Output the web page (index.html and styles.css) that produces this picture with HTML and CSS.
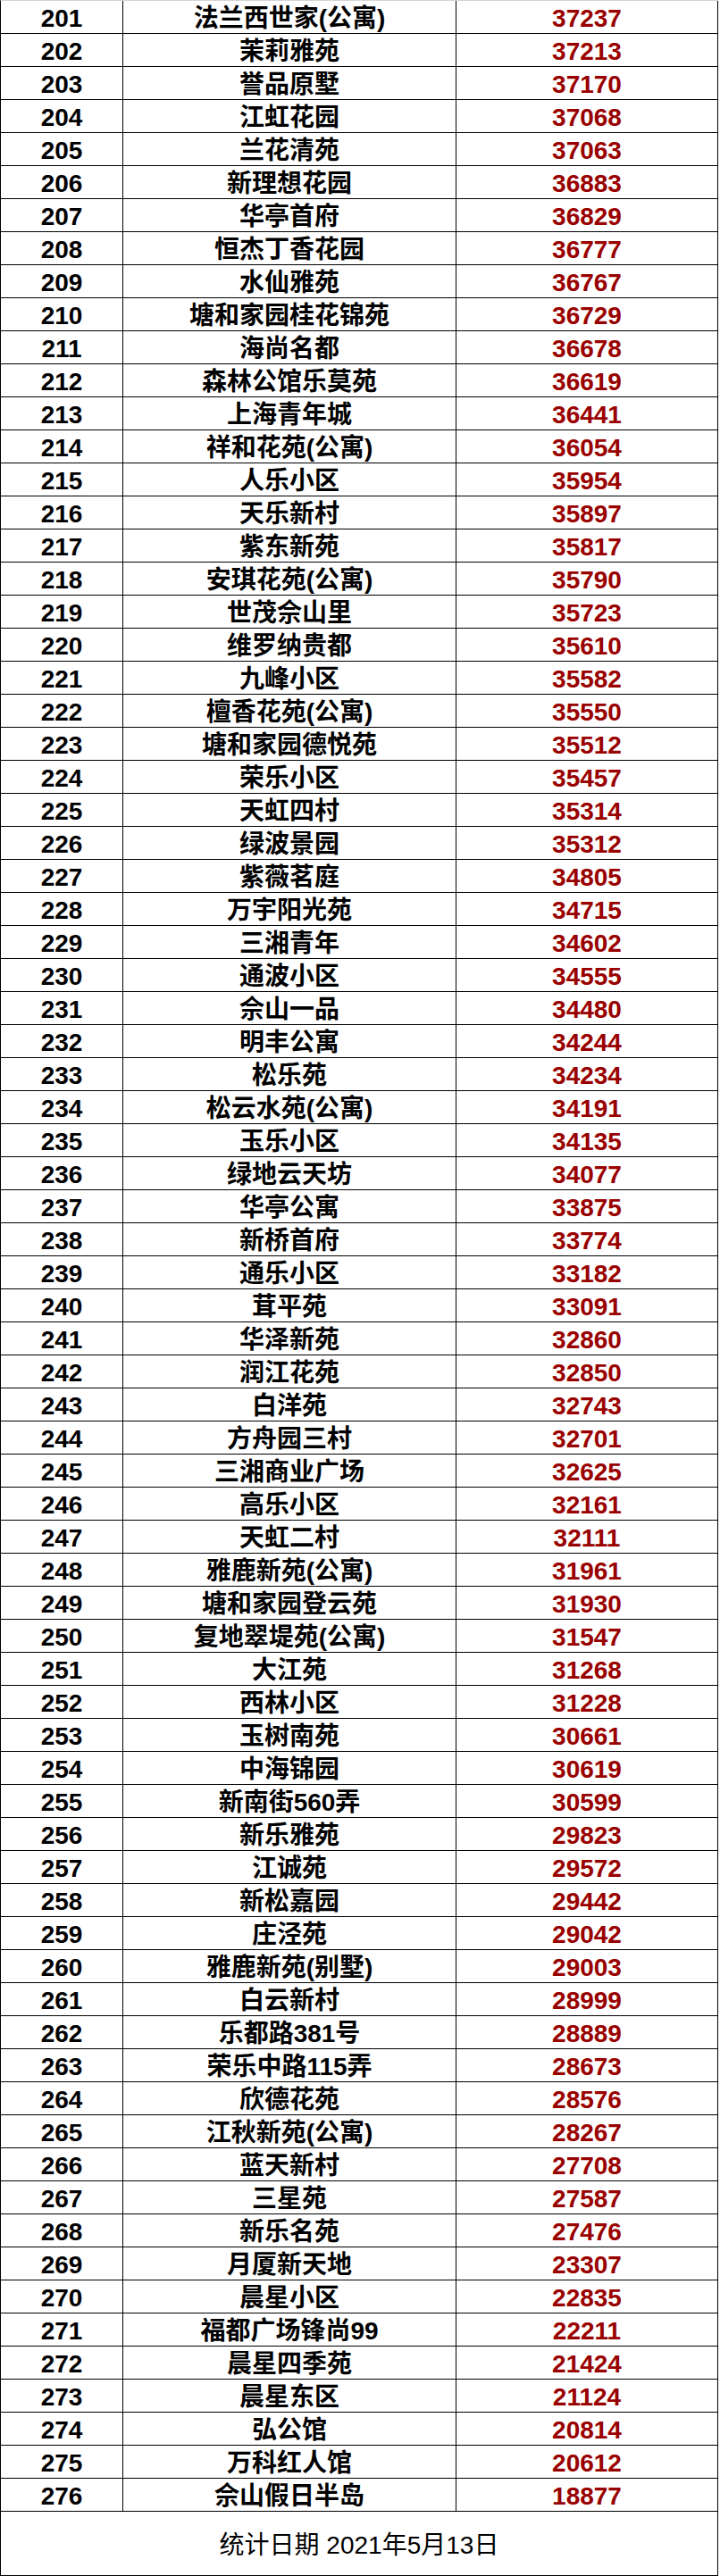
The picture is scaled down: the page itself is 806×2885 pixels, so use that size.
FILE: index.html
```html
<!DOCTYPE html>
<html lang="zh-CN">
<head>
<meta charset="utf-8">
<title>统计</title>
<link rel="stylesheet" href="styles.css">
</head>
<body>
<div class="sheet">
<div class="row"><div class="c no">201</div><div class="c nm">法兰西世家(公寓)</div><div class="c val">37237</div></div>
<div class="row"><div class="c no">202</div><div class="c nm">茉莉雅苑</div><div class="c val">37213</div></div>
<div class="row"><div class="c no">203</div><div class="c nm">誉品原墅</div><div class="c val">37170</div></div>
<div class="row"><div class="c no">204</div><div class="c nm">江虹花园</div><div class="c val">37068</div></div>
<div class="row"><div class="c no">205</div><div class="c nm">兰花清苑</div><div class="c val">37063</div></div>
<div class="row"><div class="c no">206</div><div class="c nm">新理想花园</div><div class="c val">36883</div></div>
<div class="row"><div class="c no">207</div><div class="c nm">华亭首府</div><div class="c val">36829</div></div>
<div class="row"><div class="c no">208</div><div class="c nm">恒杰丁香花园</div><div class="c val">36777</div></div>
<div class="row"><div class="c no">209</div><div class="c nm">水仙雅苑</div><div class="c val">36767</div></div>
<div class="row"><div class="c no">210</div><div class="c nm">塘和家园桂花锦苑</div><div class="c val">36729</div></div>
<div class="row"><div class="c no">211</div><div class="c nm">海尚名都</div><div class="c val">36678</div></div>
<div class="row"><div class="c no">212</div><div class="c nm">森林公馆乐莫苑</div><div class="c val">36619</div></div>
<div class="row"><div class="c no">213</div><div class="c nm">上海青年城</div><div class="c val">36441</div></div>
<div class="row"><div class="c no">214</div><div class="c nm">祥和花苑(公寓)</div><div class="c val">36054</div></div>
<div class="row"><div class="c no">215</div><div class="c nm">人乐小区</div><div class="c val">35954</div></div>
<div class="row"><div class="c no">216</div><div class="c nm">天乐新村</div><div class="c val">35897</div></div>
<div class="row"><div class="c no">217</div><div class="c nm">紫东新苑</div><div class="c val">35817</div></div>
<div class="row"><div class="c no">218</div><div class="c nm">安琪花苑(公寓)</div><div class="c val">35790</div></div>
<div class="row"><div class="c no">219</div><div class="c nm">世茂佘山里</div><div class="c val">35723</div></div>
<div class="row"><div class="c no">220</div><div class="c nm">维罗纳贵都</div><div class="c val">35610</div></div>
<div class="row"><div class="c no">221</div><div class="c nm">九峰小区</div><div class="c val">35582</div></div>
<div class="row"><div class="c no">222</div><div class="c nm">檀香花苑(公寓)</div><div class="c val">35550</div></div>
<div class="row"><div class="c no">223</div><div class="c nm">塘和家园德悦苑</div><div class="c val">35512</div></div>
<div class="row"><div class="c no">224</div><div class="c nm">荣乐小区</div><div class="c val">35457</div></div>
<div class="row"><div class="c no">225</div><div class="c nm">天虹四村</div><div class="c val">35314</div></div>
<div class="row"><div class="c no">226</div><div class="c nm">绿波景园</div><div class="c val">35312</div></div>
<div class="row"><div class="c no">227</div><div class="c nm">紫薇茗庭</div><div class="c val">34805</div></div>
<div class="row"><div class="c no">228</div><div class="c nm">万宇阳光苑</div><div class="c val">34715</div></div>
<div class="row"><div class="c no">229</div><div class="c nm">三湘青年</div><div class="c val">34602</div></div>
<div class="row"><div class="c no">230</div><div class="c nm">通波小区</div><div class="c val">34555</div></div>
<div class="row"><div class="c no">231</div><div class="c nm">佘山一品</div><div class="c val">34480</div></div>
<div class="row"><div class="c no">232</div><div class="c nm">明丰公寓</div><div class="c val">34244</div></div>
<div class="row"><div class="c no">233</div><div class="c nm">松乐苑</div><div class="c val">34234</div></div>
<div class="row"><div class="c no">234</div><div class="c nm">松云水苑(公寓)</div><div class="c val">34191</div></div>
<div class="row"><div class="c no">235</div><div class="c nm">玉乐小区</div><div class="c val">34135</div></div>
<div class="row"><div class="c no">236</div><div class="c nm">绿地云天坊</div><div class="c val">34077</div></div>
<div class="row"><div class="c no">237</div><div class="c nm">华亭公寓</div><div class="c val">33875</div></div>
<div class="row"><div class="c no">238</div><div class="c nm">新桥首府</div><div class="c val">33774</div></div>
<div class="row"><div class="c no">239</div><div class="c nm">通乐小区</div><div class="c val">33182</div></div>
<div class="row"><div class="c no">240</div><div class="c nm">茸平苑</div><div class="c val">33091</div></div>
<div class="row"><div class="c no">241</div><div class="c nm">华泽新苑</div><div class="c val">32860</div></div>
<div class="row"><div class="c no">242</div><div class="c nm">润江花苑</div><div class="c val">32850</div></div>
<div class="row"><div class="c no">243</div><div class="c nm">白洋苑</div><div class="c val">32743</div></div>
<div class="row"><div class="c no">244</div><div class="c nm">方舟园三村</div><div class="c val">32701</div></div>
<div class="row"><div class="c no">245</div><div class="c nm">三湘商业广场</div><div class="c val">32625</div></div>
<div class="row"><div class="c no">246</div><div class="c nm">高乐小区</div><div class="c val">32161</div></div>
<div class="row"><div class="c no">247</div><div class="c nm">天虹二村</div><div class="c val">32111</div></div>
<div class="row"><div class="c no">248</div><div class="c nm">雅鹿新苑(公寓)</div><div class="c val">31961</div></div>
<div class="row"><div class="c no">249</div><div class="c nm">塘和家园登云苑</div><div class="c val">31930</div></div>
<div class="row"><div class="c no">250</div><div class="c nm">复地翠堤苑(公寓)</div><div class="c val">31547</div></div>
<div class="row"><div class="c no">251</div><div class="c nm">大江苑</div><div class="c val">31268</div></div>
<div class="row"><div class="c no">252</div><div class="c nm">西林小区</div><div class="c val">31228</div></div>
<div class="row"><div class="c no">253</div><div class="c nm">玉树南苑</div><div class="c val">30661</div></div>
<div class="row"><div class="c no">254</div><div class="c nm">中海锦园</div><div class="c val">30619</div></div>
<div class="row"><div class="c no">255</div><div class="c nm">新南街560弄</div><div class="c val">30599</div></div>
<div class="row"><div class="c no">256</div><div class="c nm">新乐雅苑</div><div class="c val">29823</div></div>
<div class="row"><div class="c no">257</div><div class="c nm">江诚苑</div><div class="c val">29572</div></div>
<div class="row"><div class="c no">258</div><div class="c nm">新松嘉园</div><div class="c val">29442</div></div>
<div class="row"><div class="c no">259</div><div class="c nm">庄泾苑</div><div class="c val">29042</div></div>
<div class="row"><div class="c no">260</div><div class="c nm">雅鹿新苑(别墅)</div><div class="c val">29003</div></div>
<div class="row"><div class="c no">261</div><div class="c nm">白云新村</div><div class="c val">28999</div></div>
<div class="row"><div class="c no">262</div><div class="c nm">乐都路381号</div><div class="c val">28889</div></div>
<div class="row"><div class="c no">263</div><div class="c nm">荣乐中路115弄</div><div class="c val">28673</div></div>
<div class="row"><div class="c no">264</div><div class="c nm">欣德花苑</div><div class="c val">28576</div></div>
<div class="row"><div class="c no">265</div><div class="c nm">江秋新苑(公寓)</div><div class="c val">28267</div></div>
<div class="row"><div class="c no">266</div><div class="c nm">蓝天新村</div><div class="c val">27708</div></div>
<div class="row"><div class="c no">267</div><div class="c nm">三星苑</div><div class="c val">27587</div></div>
<div class="row"><div class="c no">268</div><div class="c nm">新乐名苑</div><div class="c val">27476</div></div>
<div class="row"><div class="c no">269</div><div class="c nm">月厦新天地</div><div class="c val">23307</div></div>
<div class="row"><div class="c no">270</div><div class="c nm">晨星小区</div><div class="c val">22835</div></div>
<div class="row"><div class="c no">271</div><div class="c nm">福都广场锋尚99</div><div class="c val">22211</div></div>
<div class="row"><div class="c no">272</div><div class="c nm">晨星四季苑</div><div class="c val">21424</div></div>
<div class="row"><div class="c no">273</div><div class="c nm">晨星东区</div><div class="c val">21124</div></div>
<div class="row"><div class="c no">274</div><div class="c nm">弘公馆</div><div class="c val">20814</div></div>
<div class="row"><div class="c no">275</div><div class="c nm">万科红人馆</div><div class="c val">20612</div></div>
<div class="row"><div class="c no">276</div><div class="c nm">佘山假日半岛</div><div class="c val">18877</div></div>
<div class="foot">统计日期 2021年5月13日</div>
</div>
</body>
</html>
```

FILE: styles.css
```css
html, body {
  margin: 0;
  padding: 0;
  background: #ffffff;
}

.sheet {
  width: 803px;
  border-left: 1px solid #000000;
  border-top: 1px solid #d4d4d4;
  font-family: "Liberation Sans", "Noto Sans CJK SC", Arial, sans-serif;
  font-size: 28px;
  color: #000000;
}

.row {
  display: grid;
  grid-template-columns: 137px 373px 293px;
  height: 37px;
}

.c {
  box-sizing: border-box;
  border-right: 1px solid #000000;
  border-bottom: 1px solid #000000;
  padding-top: 4px;
  line-height: 32px;
  text-align: center;
  white-space: nowrap;
  font-weight: 700;
}

.nm {
  font-weight: 600;
}

.val {
  color: #990000;
}

.foot {
  box-sizing: border-box;
  height: 72px;
  border-right: 1px solid #000000;
  border-bottom: 1px solid #000000;
  padding-top: 22px;
  line-height: 32px;
  text-align: center;
  font-weight: 400;
}
```
